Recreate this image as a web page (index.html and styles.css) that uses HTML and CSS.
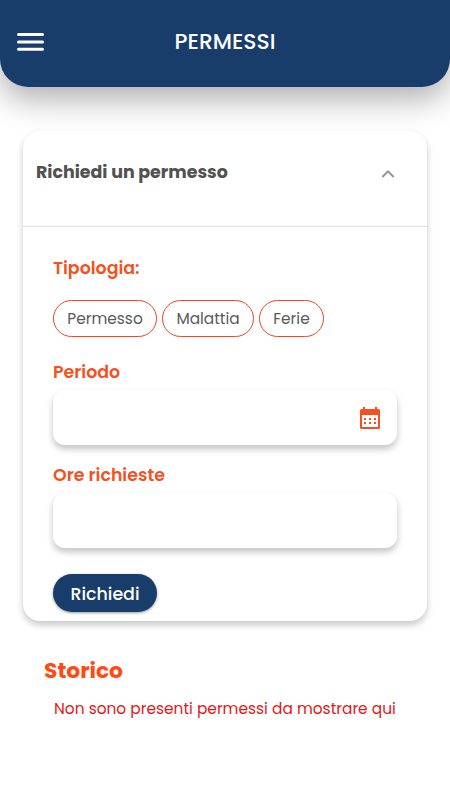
FILE: index.html
```html
<!DOCTYPE html>
<html lang="it">
<head>
<meta charset="utf-8">
<title>Permessi</title>
<link rel="stylesheet" href="styles.css">
</head>
<body>
<header class="topbar">
  <svg class="menu" viewBox="0 0 27 20" width="27" height="20"><path d="M1.500 2.600h24M1.500 10h24M1.500 17.200h24" stroke="#fff" stroke-width="3" stroke-linecap="round"/></svg>
  <h1 class="title">PERMESSI</h1>
</header>
<main>
  <section class="card">
    <div class="card-head">
      <h2 class="card-title">Richiedi un permesso</h2>
      <svg class="chevron" width="14" height="10" viewBox="0 0 14 10"><path d="M1.300 8 7 2.300 12.700 8" fill="none" stroke="#949494" stroke-width="2"/></svg>
    </div>
    <div class="card-body">
      <h3 class="label label-type">Tipologia:</h3>
      <div class="chips">
        <button class="chip chip-permesso">Permesso</button>
        <button class="chip chip-malattia">Malattia</button>
        <button class="chip chip-ferie">Ferie</button>
      </div>
      <h3 class="label label-period">Periodo</h3>
      <div class="field">
        <svg class="calendar" width="20" height="22" viewBox="0 0 20 22"><path fill="#f4511e" fill-rule="evenodd" d="M3 0h2v2h10V0h2v2h1.500a1.500 1.500 0 0 1 1.500 1.500v17a1.500 1.500 0 0 1-1.500 1.500h-17A1.500 1.500 0 0 1 0 20.500v-17A1.500 1.500 0 0 1 1.500 2H3zM2 8v12h16V8zM4 11h2v2H4zm5 0h2v2H9zm5 0h2v2h-2zM4 15h2v2H4zm5 0h2v2H9zm5 0h2v2h-2z"/></svg>
      </div>
      <h3 class="label label-hours">Ore richieste</h3>
      <div class="field"></div>
      <button class="submit">Richiedi</button>
    </div>
  </section>
  <section class="history">
    <h2 class="history-title">Storico</h2>
    <p class="empty">Non sono presenti permessi da mostrare qui</p>
  </section>
</main>
</body>
</html>
```
FILE: styles.css
```css
* { box-sizing: border-box; }
body {
  margin: 0;
  background: #fff;
  font-family: Poppins, Inter, sans-serif;
  height: 800px;
  overflow: hidden;
}
h1, h2, h3, p { margin: 0; white-space: nowrap; }
button { font-family: inherit; white-space: nowrap; padding: 0; }
svg { display: block; }
.topbar {
  height: 87px;
  display: grid;
  grid-template-columns: 44px 1fr 44px;
  align-items: center;
  padding-bottom: 3px;
  background: #193d6b;
  border-radius: 0 0 28px 28px;
  box-shadow: 0 12px 32px rgba(0, 0, 0, .32);
}
.menu { margin-left: 17px; }
.title {
  text-align: center;
  color: #fff;
  font-size: 21.8px;
  font-weight: 500;
  line-height: 30px;
}
.card {
  position: relative;
  margin: 44px 23px 0;
  height: 490px;
  background: #fff;
  border-radius: 17px;
  box-shadow: 0 4px 7px rgba(0, 0, 0, .22);
}
.card-head {
  height: 96px;
  display: flex;
  justify-content: space-between;
  padding: 28px 32px 0 13px;
  border-bottom: 1px solid #e0e0e0;
}
.card-title {
  color: #515151;
  font-size: 17.4px;
  font-weight: 700;
  line-height: 27px;
}
.chevron { margin-top: 10px; }
.card-body { padding: 28px 30px 0; }
.label {
  color: #f4511e;
  font-size: 17.4px;
  font-weight: 600;
  line-height: 27px;
}
.chips { display: flex; gap: 5px; margin: 18px 0 22px; }
.chip {
  height: 37px;
  border: 1px solid #f4431e;
  border-radius: 19px;
  background: #fff;
  color: #5a5a5a;
  font-size: 15.4px;
}
.chip-permesso { width: 104px; }
.chip-malattia { width: 92px; }
.chip-ferie { width: 65px; }
.field {
  height: 55px;
  display: flex;
  justify-content: flex-end;
  padding: 17px 17px 0 0;
  margin-top: 4px;
  border-radius: 12px;
  background: #fff;
  box-shadow: 0 4px 7px rgba(0, 0, 0, .24);
}
.label-hours { margin-top: 17px; }
.submit {
  display: block;
  width: 104px;
  height: 38px;
  margin-top: 26px;
  padding-top: 1px;
  border: 0;
  border-radius: 19px;
  background: #193d6b;
  color: #fff;
  font-size: 17.4px;
  font-weight: 500;
  box-shadow: 0 1px 3px rgba(0, 0, 0, .4);
}
.history { padding: 33px 44px 0; }
.history-title {
  color: #ff4a12;
  font-size: 21.8px;
  font-weight: 700;
  line-height: 33px;
}
.empty {
  margin: 10px 0 0 10px;
  color: #e51717;
  font-size: 15.4px;
  line-height: 23px;
}
```
